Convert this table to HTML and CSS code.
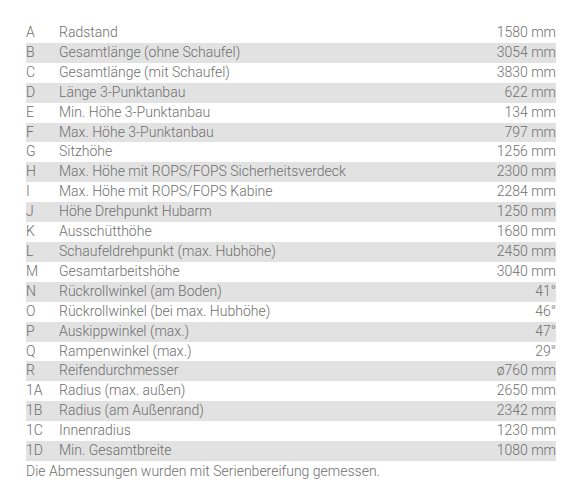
FILE: index.html
```html
<!DOCTYPE html>
<html lang="de">
<head>
<meta charset="utf-8">
<link rel="stylesheet" href="styles.css">
</head>
<body>
<div class="wrap">
  <table class="dims">
    <tbody>
      <tr><td class="k">A</td><td class="d">Radstand</td><td class="v">1580 mm</td></tr>
      <tr><td class="k">B</td><td class="d">Gesamtlänge (ohne Schaufel)</td><td class="v">3054 mm</td></tr>
      <tr><td class="k">C</td><td class="d">Gesamtlänge (mit Schaufel)</td><td class="v">3830 mm</td></tr>
      <tr><td class="k">D</td><td class="d">Länge 3-Punktanbau</td><td class="v">622 mm</td></tr>
      <tr><td class="k">E</td><td class="d">Min. Höhe 3-Punktanbau</td><td class="v">134 mm</td></tr>
      <tr><td class="k">F</td><td class="d">Max. Höhe 3-Punktanbau</td><td class="v">797 mm</td></tr>
      <tr><td class="k">G</td><td class="d">Sitzhöhe</td><td class="v">1256 mm</td></tr>
      <tr><td class="k">H</td><td class="d">Max. Höhe mit ROPS/FOPS Sicherheitsverdeck</td><td class="v">2300 mm</td></tr>
      <tr><td class="k">I</td><td class="d">Max. Höhe mit ROPS/FOPS Kabine</td><td class="v">2284 mm</td></tr>
      <tr><td class="k">J</td><td class="d">Höhe Drehpunkt Hubarm</td><td class="v">1250 mm</td></tr>
      <tr><td class="k">K</td><td class="d">Ausschütthöhe</td><td class="v">1680 mm</td></tr>
      <tr><td class="k">L</td><td class="d">Schaufeldrehpunkt (max. Hubhöhe)</td><td class="v">2450 mm</td></tr>
      <tr><td class="k">M</td><td class="d">Gesamtarbeitshöhe</td><td class="v">3040 mm</td></tr>
      <tr><td class="k">N</td><td class="d">Rückrollwinkel (am Boden)</td><td class="v">41°</td></tr>
      <tr><td class="k">O</td><td class="d">Rückrollwinkel (bei max. Hubhöhe)</td><td class="v">46°</td></tr>
      <tr><td class="k">P</td><td class="d">Auskippwinkel (max.)</td><td class="v">47°</td></tr>
      <tr><td class="k">Q</td><td class="d">Rampenwinkel (max.)</td><td class="v">29°</td></tr>
      <tr><td class="k">R</td><td class="d">Reifendurchmesser</td><td class="v">ø760 mm</td></tr>
      <tr><td class="k">1A</td><td class="d">Radius (max. außen)</td><td class="v">2650 mm</td></tr>
      <tr><td class="k">1B</td><td class="d">Radius (am Außenrand)</td><td class="v">2342 mm</td></tr>
      <tr><td class="k">1C</td><td class="d">Innenradius</td><td class="v">1230 mm</td></tr>
      <tr><td class="k">1D</td><td class="d">Min. Gesamtbreite</td><td class="v">1080 mm</td></tr>
    </tbody>
  </table>
  <p class="note">Die Abmessungen wurden mit Serienbereifung gemessen.</p>
</div>
</body>
</html>
```

FILE: styles.css
```css
html, body {
  margin: 0;
  padding: 0;
  background: #ffffff;
}
body {
  font-family: Roboto, "Noto Sans", sans-serif;
  font-weight: 300;
  font-size: 14px;
  color: #6f6f6f;
}
.wrap {
  width: 530px;
  padding: 23px 0 0 26px;
}
.dims {
  width: 100%;
  border-collapse: collapse;
  border-spacing: 0;
}
.dims td {
  padding: 0;
  height: 19.9px;
  line-height: 19.9px;
  vertical-align: middle;
  white-space: nowrap;
}
.dims tr:nth-child(even) td {
  background: #e2e2e2;
}
.k {
  width: 33px;
}
.v {
  text-align: right;
}
.note {
  margin: 0;
  line-height: 20px;
}
```
